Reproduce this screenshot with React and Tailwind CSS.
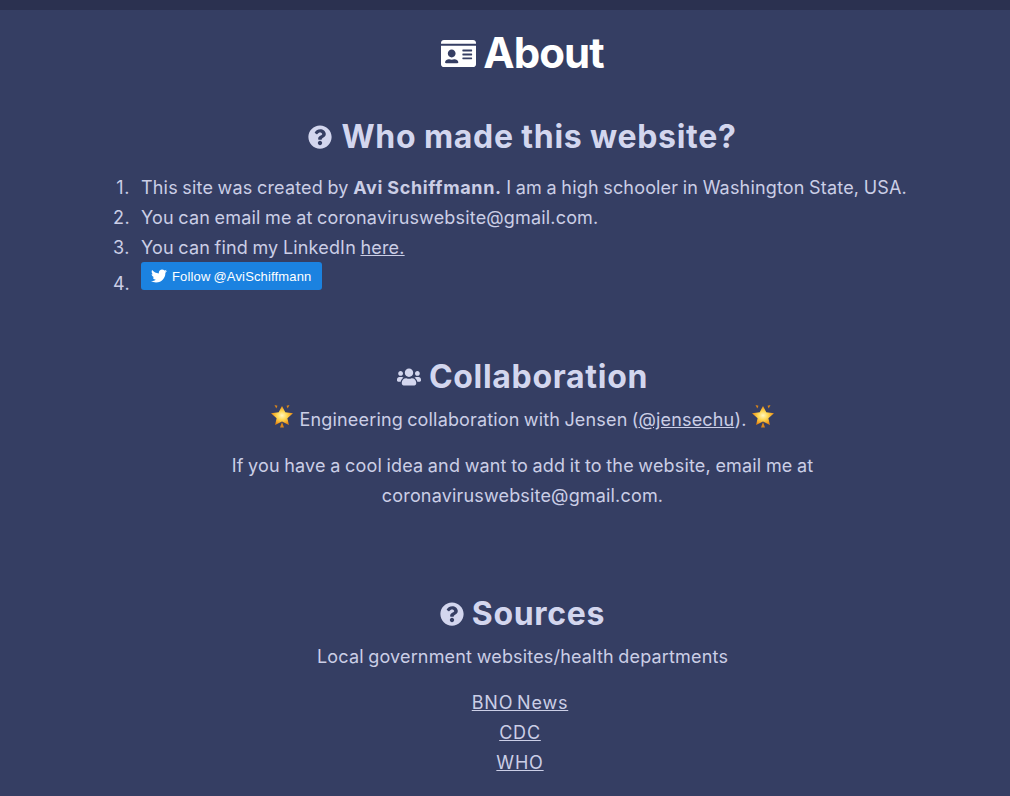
import React from "react";
import { FaIdCard, FaQuestionCircle, FaUsers, FaTwitter } from "react-icons/fa";

function Star({ className = "" }) {
  return (
    <svg viewBox="0 0 24 24" className={`inline-block w-[24px] h-[24px] align-[-2px] ${className}`}>
      <defs>
        <radialGradient id="s" cx="50%" cy="50%" r="52%">
          <stop offset="0%" stopColor="#fff7c0" />
          <stop offset="45%" stopColor="#fdd650" />
          <stop offset="100%" stopColor="#e8830c" />
        </radialGradient>
      </defs>
      <path d="M12 2l3.3 6.2 7.7 1.1-5.6 4.9 1.5 6.8L12 17.6l-6.9 3.4 1.5-6.8L1 9.3l7.7-1.1z" fill="url(#s)" />
      <path d="M4.5 1l3 .8-1.2 2.8zM19.5 1l-3 .8 1.2 2.8zM12 18l2 5.5h-4z" fill="#d9851a" />
    </svg>
  );
}

const number = "w-[17px] mr-[11px] shrink-0 text-right tracking-[0.6px]";
const heading = "flex items-center gap-[8px] text-[32px] leading-[46px] font-bold tracking-[0.7px] text-[#d3d6ee]";

export default function App() {
  return (
    <div className="h-[796px] overflow-hidden bg-[#353e63] text-[#cbcee6] text-[18px] leading-[30px] tracking-[0.17px] [word-spacing:-0.7px] font-['Inter',sans-serif]">
      <div className="h-[10px] bg-[#2b3150]" />
      <div className="flex flex-col items-center pl-[35px]">
        <h1 className="mt-[16px] flex items-center gap-[7px] text-[42px] leading-[54px] font-bold tracking-[-0.9px] text-white">
          <FaIdCard className="w-[35px] h-[35px]" />
          About
        </h1>
        <h2 className={`mt-[34px] ${heading} gap-[9px]`}>
          <FaQuestionCircle className="w-[24px] h-[24px]" />
          Who made this website?
        </h2>
      </div>
      <ol className="mt-[13px] ml-[113px] list-none">
        <li className="flex items-baseline"><span className={number}>1.</span><span>This site was created by <b className="font-bold tracking-[0.65px]">Avi Schiffmann.</b> I am a high schooler in Washington State, USA.</span></li>
        <li className="flex items-baseline"><span className={number}>2.</span><span>You can email me at coronaviruswebsite@gmail.com.</span></li>
        <li className="flex items-baseline"><span className={number}>3.</span><span>You can find my LinkedIn <u>here.</u></span></li>
        <li className="flex items-baseline -mt-[1px]"><span className={number}>4.</span>
          <div>
            <span className="inline-block overflow-hidden h-[28px] w-[181px] rounded-[3px] bg-[#1b82e0] text-white">
              <span className="flex items-center gap-[5px] h-full pl-[10px] text-[13px] leading-none font-medium tracking-[0.15px] font-['Liberation_Sans',sans-serif]">
                <FaTwitter className="w-[16px] h-[16px]" />Follow @AviSchiffmann
              </span>
            </span>
          </div>
        </li>
      </ol>
      <div className="flex flex-col items-center pl-[35px] mt-[55px]">
        <h2 className={heading}>
          <FaUsers className="w-[24px] h-[24px]" />
          Collaboration
        </h2>
        <p className="mt-[4px] [word-spacing:-1px]"><Star className="mr-[1px]" /> Engineering collaboration with Jensen (<u>@jensechu</u>). <Star /></p>
        <p className="mt-[16px] w-[620px] text-center">If you have a cool idea and want to add it to the website, email me at coronaviruswebsite@gmail.com.</p>
        <h2 className={`mt-[80px] ${heading}`}>
          <FaQuestionCircle className="w-[24px] h-[24px]" />
          Sources
        </h2>
        <p className="mt-[5px]">Local government websites/health departments</p>
        <div className="mt-[16px] flex flex-col items-center pr-[5px] tracking-[0.8px] [word-spacing:-2px]">
          <u>BNO News</u>
          <u>CDC</u>
          <u>WHO</u>
        </div>
      </div>
    </div>
  );
}
